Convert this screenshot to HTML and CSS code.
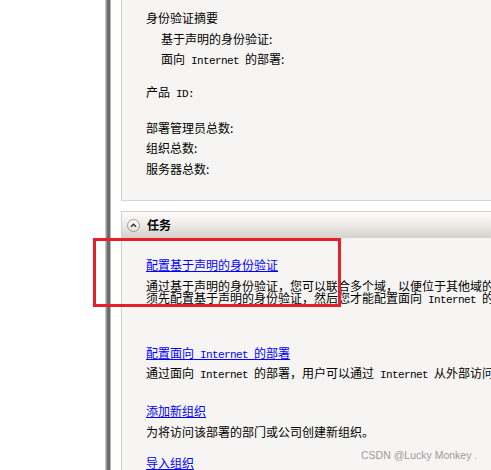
FILE: index.html
```html
<!DOCTYPE html>
<html lang="zh-CN">
<head>
<meta charset="utf-8">
<title>身份验证摘要</title>
<link rel="stylesheet" href="styles.css">
</head>
<body>
<div class="page">
  <div class="gutter"></div>
  <div class="splitter"></div>
  <div class="main">
    <section class="panel summary">
      <p class="row">身份验证摘要</p>
      <p class="row indent">基于声明的身份验证:</p>
      <p class="row indent">面向<span class="en"> Internet </span>的部署:</p>
      <p class="row gap-a">产品<span class="en"> ID:</span></p>
      <p class="row gap-b">部署管理员总数:</p>
      <p class="row">组织总数:</p>
      <p class="row">服务器总数:</p>
    </section>

    <section class="panel tasks">
      <header class="tasks-head">
        <svg class="chev" width="13" height="13" viewBox="0 0 13 13" aria-hidden="true">
          <defs>
            <linearGradient id="cg" x1="0" y1="0" x2="0" y2="1">
              <stop offset="0" stop-color="#ffffff"/>
              <stop offset="1" stop-color="#e4e2de"/>
            </linearGradient>
          </defs>
          <circle cx="6.5" cy="6.5" r="6" fill="url(#cg)" stroke="#9c9a98" stroke-width="1"/>
          <polyline points="4,7.8 6.5,5.3 9,7.8" fill="none" stroke="#2a2a2a" stroke-width="1.4"/>
        </svg>
        <span class="tasks-title">任务</span>
      </header>
      <div class="tasks-body">
        <div class="task">
          <a class="task-link" href="#">配置基于声明的身份验证</a>
          <p class="task-desc">通过基于声明的身份验证，您可以联合多个域，以便位于其他域的用户访问此部署。您必<br>须先配置基于声明的身份验证，然后您才能配置面向<span class="en"> Internet </span>的部署。</p>
        </div>
        <div class="task task-2">
          <a class="task-link" href="#">配置面向<span class="en"> Internet </span>的部署</a>
          <p class="task-desc">通过面向<span class="en"> Internet </span>的部署，用户可以通过<span class="en"> Internet </span>从外部访问此部署。</p>
        </div>
        <div class="task task-3">
          <a class="task-link" href="#">添加新组织</a>
          <p class="task-desc">为将访问该部署的部门或公司创建新组织。</p>
        </div>
        <div class="task task-4">
          <a class="task-link" href="#">导入组织</a>
          <p class="task-desc">从文件导入组织。</p>
        </div>
      </div>
    </section>
  </div>
</div>
<div class="annot"></div>
<div class="watermark">CSDN @Lucky Monkey .</div>
</body>
</html>
```

FILE: styles.css
```css
html, body {
  margin: 0;
  padding: 0;
  background: #ffffff;
  width: 491px;
  height: 470px;
  overflow: hidden;
}

body {
  position: relative;
  font-family: "Noto Sans CJK SC", "Noto Sans", sans-serif;
  font-size: 12px;
  color: #000000;
}

.page {
  display: flex;
  width: 900px;
  height: 470px;
}

.gutter {
  width: 105px;
  flex: none;
  background: #ffffff;
}

.splitter {
  width: 6px;
  flex: none;
  background: linear-gradient(to right,
    #c8c8d4 0, #c8c8d4 1px,
    #9a9a9a 1px, #9a9a9a 2px,
    #6c6c6c 2px, #6c6c6c 5px,
    #b4b4c4 5px, #b4b4c4 6px);
}

.main {
  flex: none;
  width: 700px;
  padding-left: 10px;
  background: #ffffff;
}

.panel {
  width: 640px;
  background: #f6f5f3;
  border-left: 1px solid #d0d0d0;
}

.en {
  font-family: "Liberation Mono", monospace;
  font-size: 11px;
  letter-spacing: -0.6px;
  line-height: 10px;
  white-space: pre;
}

/* summary */
.summary {
  padding: 8px 0 21px 24px;
  border-bottom: 1px solid #d3d3d3;
}

.row {
  margin: 0;
  line-height: 20.5px;
  white-space: nowrap;
}

.row.indent {
  padding-left: 15px;
}

.row.gap-a {
  margin-top: 12.5px;
}

.row.gap-b {
  margin-top: 15px;
}

/* tasks */
.tasks {
  margin-top: 10px;
  border-top: 1px solid #d0d0d0;
  height: 300px;
}

.tasks-head {
  display: flex;
  align-items: center;
  gap: 7px;
  height: 26px;
  padding-left: 5px;
  background: linear-gradient(to bottom, #fdfcfb 0%, #efedea 45%, #d5d1cb 100%);
}

.chev {
  display: block;
  flex: none;
}

.tasks-title {
  font-weight: bold;
  font-size: 12px;
  line-height: 26px;
}

.tasks-body {
  padding: 17px 0 0 24px;
}

.task-link {
  display: block;
  line-height: 20.5px;
  color: #0000ff;
  text-decoration: underline;
  white-space: nowrap;
}

.task-desc {
  margin: 4px 0 0;
  line-height: 12px;
  white-space: nowrap;
}

.task-2 {
  margin-top: 38px;
}

.task-3 {
  margin-top: 21px;
}

.task-4 {
  margin-top: 15.5px;
}

/* overlays */
.annot {
  position: absolute;
  left: 93px;
  top: 238px;
  width: 248px;
  height: 69px;
  box-sizing: border-box;
  border: 3px solid #e5202a;
}

.watermark {
  position: absolute;
  left: 361px;
  top: 449px;
  font-family: "Liberation Sans", Arial, sans-serif;
  font-size: 10.5px;
  color: #9c9c9c;
  white-space: nowrap;
}
```
